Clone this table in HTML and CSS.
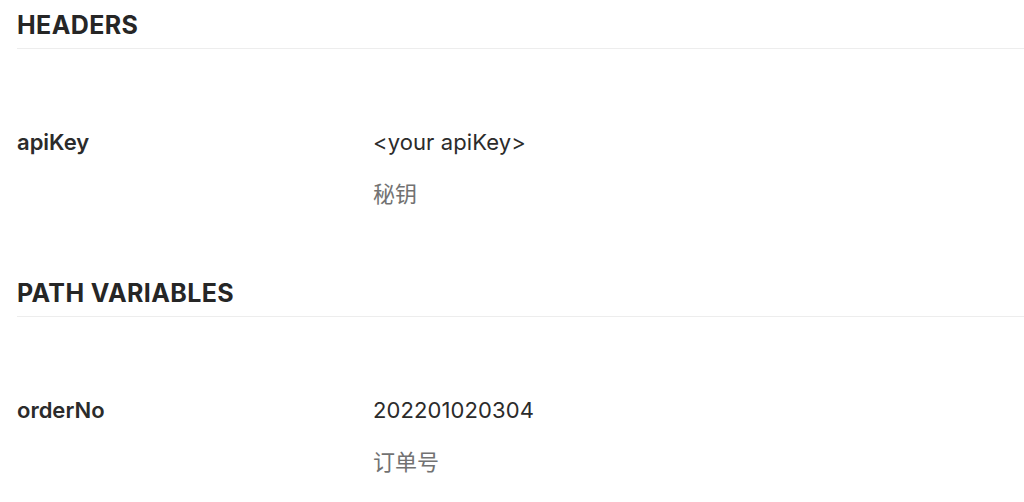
FILE: index.html
```html
<html>
  <head>
    <title>Request Params</title>
    <link rel="stylesheet" href="styles.css">
  </head>
  <body>

    <div class="doc">
      <section class="params">
        <h2 class="params-title">HEADERS</h2>
        <div class="param-row">
          <div class="param-name">apiKey</div>
          <div class="param-info">
            <div class="param-value">&lt;your apiKey&gt;</div>
            <div class="param-desc">秘钥</div>
          </div>
        </div>
      </section>

      <section class="params">
        <h2 class="params-title">PATH VARIABLES</h2>
        <div class="param-row">
          <div class="param-name">orderNo</div>
          <div class="param-info">
            <div class="param-value">202201020304</div>
            <div class="param-desc">订单号</div>
          </div>
        </div>
      </section>
    </div>

  </body>
</html>
```

FILE: styles.css
```css
body {
  font-family: Inter, "Noto Sans CJK SC", sans-serif;
  margin: 0;
  padding: 0;
  background-color: #ffffff;
  color: #2b2b2b;
}

.doc {
  padding-left: 17px;
}

.params {
  padding: 10px 0 61px;
}

.params-title {
  margin: 0;
  font-size: 25px;
  line-height: 30px;
  font-weight: 700;
  letter-spacing: 0.4px;
  color: #262626;
  padding-bottom: 8px;
  border-bottom: 1px solid #ededed;
}

.param-row {
  display: grid;
  grid-template-columns: 356px 1fr;
  margin-top: 78px;
  font-size: 22px;
  line-height: 30px;
}

.param-name {
  font-weight: 600;
  color: #2b2b2b;
}

.param-value {
  color: #2b2b2b;
  letter-spacing: 0.1px;
}

.param-desc {
  margin-top: 20px;
  color: #727272;
  font-family: "Noto Sans CJK SC", sans-serif;
}
```
